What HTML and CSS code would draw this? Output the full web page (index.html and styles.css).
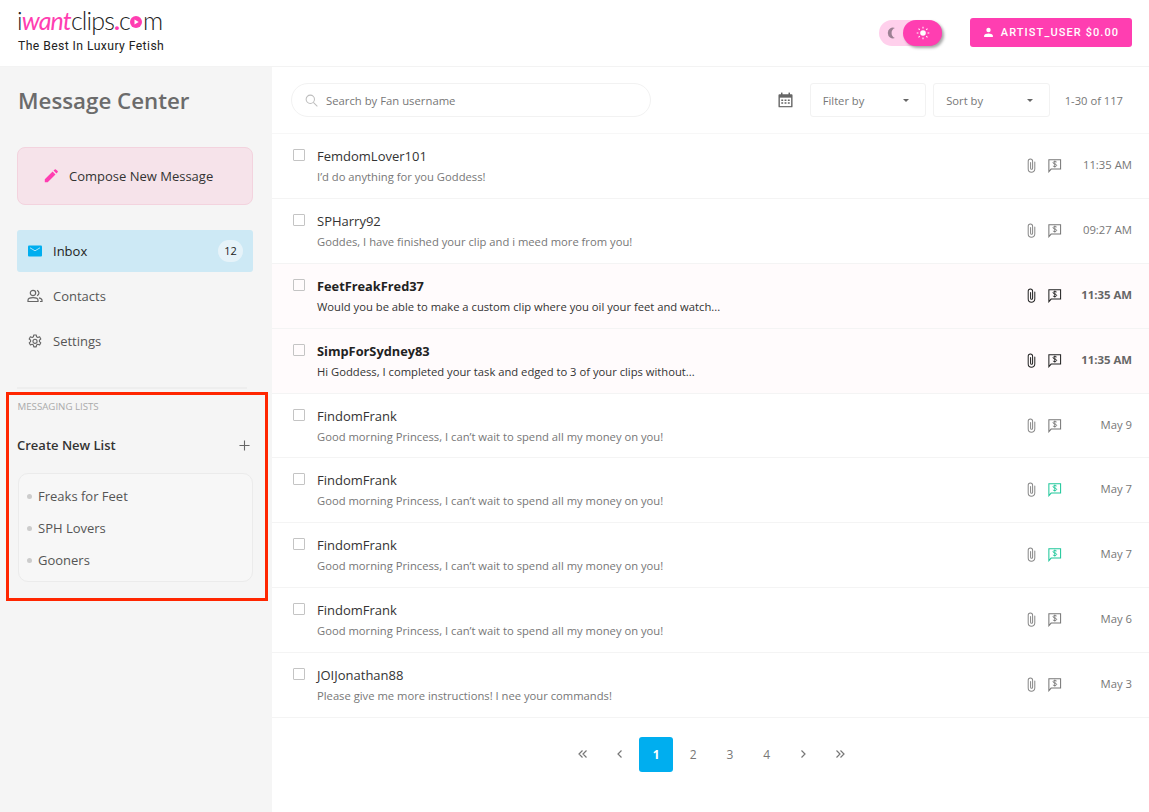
FILE: index.html
```html
<!DOCTYPE html>
<html lang="en">
<head>
<meta charset="utf-8">
<title>Message Center</title>
<link rel="stylesheet" href="styles.css">
</head>
<body>
<svg class="defs" width="0" height="0" aria-hidden="true">
  <symbol id="clip" viewBox="0 0 12 16"><path d="M9.6 4.2v7.6a3.6 3.6 0 0 1-7.2 0V3.4a2.4 2.4 0 0 1 4.8 0v7.6a1.1 1.1 0 0 1-2.2 0V4.6" fill="none" stroke="currentColor" stroke-width="1.1" stroke-linecap="round"/></symbol>
  <symbol id="dollar" viewBox="0 0 16 16"><path d="M2 1.8h12.5v10H4.4L2 14.6z" fill="none" stroke="currentColor" stroke-width="1.1" stroke-linejoin="miter"/><path d="M10.3 4.3c-.5-.7-3.9-1-3.9.8 0 1.8 3.9.9 3.9 2.7 0 1.8-3.4 1.5-4 .7M8.3 2.8v7.4" fill="none" stroke="currentColor" stroke-width=".95"/></symbol>
</svg>
<header class="topbar">
  <div class="brand">
    <div class="logo"><span class="dark">i</span><span class="pink want">want</span><span class="dark">clips</span><span class="pink dot">.</span><span class="dark">c</span><svg class="logo-o" viewBox="0 0 16 16"><circle cx="8" cy="8" r="8" fill="#ff3eb1"/><path d="M6 4.6 11.6 8 6 11.4z" fill="#fff"/></svg><span class="dark">m</span></div>
    <div class="tagline">The Best In Luxury Fetish</div>
  </div>
  <div class="top-actions">
    <div class="toggle">
      <svg class="moon" viewBox="0 0 12 14"><path d="M9.5 1A6.2 6.2 0 0 0 1 7a6.2 6.2 0 0 0 8.500 6A6.500 6.500 0 0 1 9.500 1z" fill="#9c8093"/></svg>
      <span class="knob"><svg viewBox="0 0 16 16" width="14" height="14"><circle cx="8" cy="8" r="3.200" fill="#fff"/><path d="M8 .8v2M8 13.200v2M.8 8h2M13.200 8h2M2.900 2.900l1.400 1.400M11.700 11.700l1.400 1.400M2.900 13.100l1.400-1.400M11.700 4.300l1.400-1.400" stroke="#fff" stroke-width="1.200"/></svg></span>
    </div>
    <button class="account"><svg viewBox="0 0 12 12" width="11" height="11"><circle cx="6" cy="3.200" r="2.400" fill="#fff"/><path d="M1.200 11V9.500C1.200 8 4 7.200 6 7.200s4.800.8 4.800 2.300V11z" fill="#fff"/></svg><span>ARTIST_USER $0.00</span></button>
  </div>
</header>
<div class="shell">
  <aside class="sidebar">
    <h1 class="page-title">Message Center</h1>
    <button class="compose"><svg viewBox="0 0 14 14" width="14" height="14"><path d="M.8 13.200V10.300L8.600 2.500l2.900 2.900-7.800 7.800zM9.500 1.600 10.800.4a.8.8 0 0 1 1.100 0l1.700 1.700a.8.8 0 0 1 0 1.100L12.400 4.500z" fill="#ff3eb1"/></svg><span>Compose New Message</span></button>
    <nav class="nav">
      <a class="nav-item active"><svg viewBox="0 0 14 12" width="14" height="12"><rect width="14" height="11" y=".5" rx="1" fill="#00aeef"/><path d="M2 2.800 7 5.800l5-3" fill="none" stroke="#d6f1fb" stroke-width=".8"/></svg><span class="nav-label">Inbox</span><span class="badge">12</span></a>
      <a class="nav-item"><svg viewBox="0 0 16 14" width="16" height="14"><circle cx="6" cy="4" r="2.700" fill="none" stroke="#666" stroke-width="1.200"/><path d="M1 12.500v-1.300C1 9.600 3.500 8.700 6 8.700s5 .9 5 2.500v1.300zM10 1.400a2.700 2.700 0 0 1 0 5.200M12 8.900c1.600.4 3 1.200 3 2.400v1.200h-2" fill="none" stroke="#666" stroke-width="1.200"/></svg><span class="nav-label">Contacts</span></a>
      <a class="nav-item"><svg viewBox="0 0 16 16" width="15" height="15"><path d="M6.700 1h2.600l.4 2 1.300.7 1.900-.7 1.300 2.300-1.500 1.300v1.500l1.500 1.300-1.300 2.300-1.900-.7-1.300.7-.4 2H6.700l-.4-2-1.300-.7-1.900.7-1.300-2.300 1.500-1.300V6.600L1.800 5.300l1.300-2.300 1.900.7 1.300-.7z" fill="none" stroke="#666" stroke-width="1.200" stroke-linejoin="round"/><circle cx="8" cy="7.800" r="2.200" fill="none" stroke="#666" stroke-width="1.200"/></svg><span class="nav-label">Settings</span></a>
    </nav>
    <hr class="rule">
    <section class="lists">
      <div class="lists-heading">MESSAGING LISTS</div>
      <div class="create"><span>Create New List</span><svg viewBox="0 0 12 12" width="11" height="11"><path d="M6 .5v11M.5 6h11" stroke="#666" stroke-width="1.200"/></svg></div>
      <ul class="list-card">
        <li>Freaks for Feet</li>
        <li>SPH Lovers</li>
        <li>Gooners</li>
      </ul>
    </section>
  </aside>
  <main class="main">
    <div class="toolbar">
      <div class="search"><svg viewBox="0 0 14 14" width="13" height="13"><circle cx="5.700" cy="5.700" r="4.500" fill="none" stroke="#bdbdbd" stroke-width="1.100"/><path d="m9 9 4.300 4.300" stroke="#bdbdbd" stroke-width="1.100"/></svg><span>Search by Fan username</span></div>
      <svg class="cal" viewBox="0 0 16 17" width="15" height="16"><path d="M1.500 2.300h13a1 1 0 0 1 1 1v12a1 1 0 0 1-1 1h-13a1 1 0 0 1-1-1v-12a1 1 0 0 1 1-1z" fill="#666"/><rect x="3.200" y=".6" width="1.600" height="3" fill="#666"/><rect x="11.200" y=".6" width="1.600" height="3" fill="#666"/><rect x="2" y="6" width="12" height="9" fill="#fff"/><path d="M3.500 8h2v1.500h-2zM7 8h2v1.500H7zM10.500 8h2v1.500h-2zM3.500 11h2v1.500h-2zM7 11h2v1.500H7zM10.500 11h2v1.500h-2z" fill="#666"/></svg>
      <div class="select"><span>Filter by</span><i class="caret"></i></div>
      <div class="select"><span>Sort by</span><i class="caret"></i></div>
      <div class="count">1-30 of 117</div>
    </div>
    <ul class="rows">
      <li class="row"><span class="check"></span><div class="body"><div class="name">FemdomLover101</div><div class="preview">I’d do anything for you Goddess!</div></div><svg class="i-clip"><use href="#clip"/></svg><svg class="i-dollar"><use href="#dollar"/></svg><time>11:35 AM</time></li>
      <li class="row"><span class="check"></span><div class="body"><div class="name">SPHarry92</div><div class="preview">Goddes, I have finished your clip and i meed more from you!</div></div><svg class="i-clip"><use href="#clip"/></svg><svg class="i-dollar"><use href="#dollar"/></svg><time>09:27 AM</time></li>
      <li class="row unread"><span class="check"></span><div class="body"><div class="name">FeetFreakFred37</div><div class="preview">Would you be able to make a custom clip where you oil your feet and watch...</div></div><svg class="i-clip"><use href="#clip"/></svg><svg class="i-dollar"><use href="#dollar"/></svg><time>11:35 AM</time></li>
      <li class="row unread"><span class="check"></span><div class="body"><div class="name">SimpForSydney83</div><div class="preview">Hi Goddess, I completed your task and edged to 3 of your clips without...</div></div><svg class="i-clip"><use href="#clip"/></svg><svg class="i-dollar"><use href="#dollar"/></svg><time>11:35 AM</time></li>
      <li class="row"><span class="check"></span><div class="body"><div class="name">FindomFrank</div><div class="preview">Good morning Princess, I can’t wait to spend all my money on you!</div></div><svg class="i-clip"><use href="#clip"/></svg><svg class="i-dollar"><use href="#dollar"/></svg><time>May 9</time></li>
      <li class="row"><span class="check"></span><div class="body"><div class="name">FindomFrank</div><div class="preview">Good morning Princess, I can’t wait to spend all my money on you!</div></div><svg class="i-clip"><use href="#clip"/></svg><svg class="i-dollar paid"><use href="#dollar"/></svg><time>May 7</time></li>
      <li class="row"><span class="check"></span><div class="body"><div class="name">FindomFrank</div><div class="preview">Good morning Princess, I can’t wait to spend all my money on you!</div></div><svg class="i-clip"><use href="#clip"/></svg><svg class="i-dollar paid"><use href="#dollar"/></svg><time>May 7</time></li>
      <li class="row"><span class="check"></span><div class="body"><div class="name">FindomFrank</div><div class="preview">Good morning Princess, I can’t wait to spend all my money on you!</div></div><svg class="i-clip"><use href="#clip"/></svg><svg class="i-dollar"><use href="#dollar"/></svg><time>May 6</time></li>
      <li class="row"><span class="check"></span><div class="body"><div class="name">JOIJonathan88</div><div class="preview">Please give me more instructions! I nee your commands!</div></div><svg class="i-clip"><use href="#clip"/></svg><svg class="i-dollar"><use href="#dollar"/></svg><time>May 3</time></li>
    </ul>
    <nav class="pager">
      <a><svg viewBox="0 0 10 10" width="10" height="10"><path d="M4.500 1.500 1 5l3.500 3.500M8.500 1.500 5 5l3.500 3.500" fill="none" stroke="#777" stroke-width="1.200"/></svg></a>
      <a><svg viewBox="0 0 10 10" width="10" height="10"><path d="M6.500 1.500 3 5l3.500 3.500" fill="none" stroke="#777" stroke-width="1.200"/></svg></a>
      <a class="current">1</a><a>2</a><a>3</a><a>4</a>
      <a><svg viewBox="0 0 10 10" width="10" height="10"><path d="M3.500 1.500 7 5 3.500 8.500" fill="none" stroke="#777" stroke-width="1.200"/></svg></a>
      <a><svg viewBox="0 0 10 10" width="10" height="10"><path d="M1.500 1.500 5 5 1.500 8.500M5.500 1.500 9 5 5.500 8.500" fill="none" stroke="#777" stroke-width="1.200"/></svg></a>
    </nav>
  </main>
</div>
</body>
</html>
```
FILE: styles.css
```css
* { box-sizing: border-box; }
html, body { margin: 0; height: 100%; }
body { font-family: "Open Sans", sans-serif; background: #fff; color: #333; overflow: hidden; }
.defs { position: absolute; }
ul { list-style: none; margin: 0; padding: 0; }
button { font: inherit; border: 0; cursor: pointer; }

.topbar { height: 67px; display: flex; justify-content: space-between; align-items: center; padding: 0 17px; background: #fff; border-bottom: 1px solid #f3f3f3; }
.brand { display: flex; flex-direction: column; margin-top: -5px; }
.logo { display: flex; align-items: center; font-family: Lato, sans-serif; font-weight: 300; font-size: 25px; line-height: 30px; height: 28px; letter-spacing: -.85px; }
.dark { color: #222; }
.pink { color: #ff3eb1; }
.want { font-style: italic; font-weight: 400; }
.dot { font-weight: 700; }
.logo-o { width: 12px; height: 12px; margin: 3px .5px 0 .5px; }
.tagline { font-family: Roboto, sans-serif; font-size: 12.2px; line-height: 18px; letter-spacing: .42px; color: #222; margin: 3px 0 0 1px; }
.top-actions { display: flex; align-items: center; gap: 28px; margin-top: -1px; }
.toggle { width: 63px; height: 26px; border-radius: 13px; background: #ffd0ec; display: flex; align-items: center; justify-content: space-between; padding-left: 8px; }
.moon { width: 10px; height: 12px; }
.knob { width: 39px; height: 26px; border-radius: 13px; background: #ff3eb1; display: flex; align-items: center; justify-content: center; box-shadow: 2px 2px 3px rgba(0,0,0,.35); }
.account { height: 29px; width: 162px; background: #ff3eb1; color: #fff; border-radius: 3px; display: flex; align-items: center; justify-content: center; gap: 7px; font-family: Roboto, sans-serif; font-weight: 500; font-size: 11px; letter-spacing: 1.1px; }

.shell { display: flex; height: 745px; }
.sidebar { width: 272px; flex: none; background: #f5f5f5; padding: 0 19px 0 17px; }
.page-title { margin: 16px 0 28px 1px; font-size: 22.3px; line-height: 36px; font-weight: 600; color: #6b6b6b; }
.compose { width: 236px; height: 58px; background: #f6e3ea; border: 1px solid #f3d3de; border-radius: 8px; display: flex; align-items: center; gap: 11px; padding-left: 26px; font-weight: 500; font-size: 13px; color: #333; }
.nav { margin-top: 25px; display: flex; flex-direction: column; gap: 3px; width: 236px; }
.nav-item { height: 42px; display: flex; align-items: center; gap: 10px; padding: 0 10px; font-size: 13px; color: #555; border-radius: 3px; }
.nav-item svg { width: 16px; }
.nav-item.active { background: #cde9f5; color: #222; font-weight: 500; }
.nav-label { flex: 1; }
.badge { width: 25px; height: 22px; border-radius: 11px; background: #e6f3f9; text-align: center; font-size: 11px; line-height: 22px; color: #222; }
.rule { width: 230px; height: 2px; border: 0; background: #eee; margin: 25px 0 3px; }

.lists { margin-left: -11px; width: 262px; height: 209px; border: 3px solid #ff2600; padding: 5px 12px 0 8px; }
.lists-heading { font-size: 9.7px; line-height: 14px; font-weight: 400; color: #aaa; margin-left: .5px; }
.create { display: flex; justify-content: space-between; align-items: center; margin-top: 21px; padding-right: 3px; font-size: 13px; font-weight: 600; color: #333; height: 20px; }
.list-card { margin: 18px 0 0 1px; height: 109px; width: 235px; background: #f7f7f7; border: 1px solid #ebebeb; border-radius: 10px; padding: 6px 0 0 19px; font-size: 13px; color: #555; }
.list-card li { height: 32px; line-height: 32px; position: relative; }
.list-card li::before { content: ""; position: absolute; left: -11px; top: 14px; width: 5px; height: 5px; border-radius: 50%; background: #ccc; }

.main { flex: 1; min-width: 0; display: flex; flex-direction: column; }
.toolbar { height: 67px; display: flex; align-items: center; padding: 0 26px 0 19px; border-bottom: 1px solid #f7f7f7; }
.search { width: 360px; height: 34px; border: 1px solid #f2f2f2; border-radius: 18px; display: flex; align-items: center; gap: 8px; padding-left: 13px; font-size: 11.3px; color: #777; }
.cal { margin-left: auto; margin-right: 17px; }
.select { width: 116.5px; height: 34px; border: 1px solid #f2f2f2; border-radius: 3px; display: flex; align-items: center; justify-content: space-between; padding: 0 16px 0 12px; font-size: 11.2px; color: #777; margin-right: 7px; }
.select + .select { margin-right: 15px; }
.caret { width: 0; height: 0; border: 3.5px solid transparent; border-top-color: #666; border-bottom: 0; }
.count { font-size: 11.2px; color: #777; }

.rows { display: flex; flex-direction: column; }
.row { height: 64.9px; padding: 0 17px 0 21px; display: flex; align-items: flex-start; border-bottom: 1px solid #f4f4f4; }
.check { flex: none; width: 12px; height: 12px; margin-top: 15px; border: 1px solid #c4c4c4; border-radius: 1px; }
.body { flex: 1; margin-left: 12px; padding-top: 13px; }
.name { font-size: 13px; line-height: 19px; color: #333; }
.preview { font-size: 11.22px; line-height: 16px; margin-top: 3px; color: #777; }
.i-clip { flex: none; width: 11px; height: 15px; margin-top: 24px; color: #888; }
.i-dollar { flex: none; width: 15px; height: 15px; margin: 24px 0 0 10px; color: #777; }
.i-dollar.paid { color: #1fc79a; }
time { flex: none; width: 70px; text-align: right; font-size: 11.3px; line-height: 16px; margin-top: 23px; color: #777; }
.unread { background: #fffbfc; }
.unread .name { font-weight: 700; color: #222; font-size: 12.8px; }
.unread .preview { color: #333; }
.unread .i-clip, .unread .i-dollar { color: #222; }
.unread time { font-weight: 700; color: #666; font-size: 11.4px; }

.pager { display: flex; justify-content: center; align-items: center; gap: 2.8px; margin-top: 18.5px; padding-left: 2px; }
.pager a { width: 34px; height: 35px; display: flex; align-items: center; justify-content: center; font-size: 12px; color: #777; border-radius: 3px; }
.pager .current { background: #00aeef; color: #fff; font-weight: 700; }
```
